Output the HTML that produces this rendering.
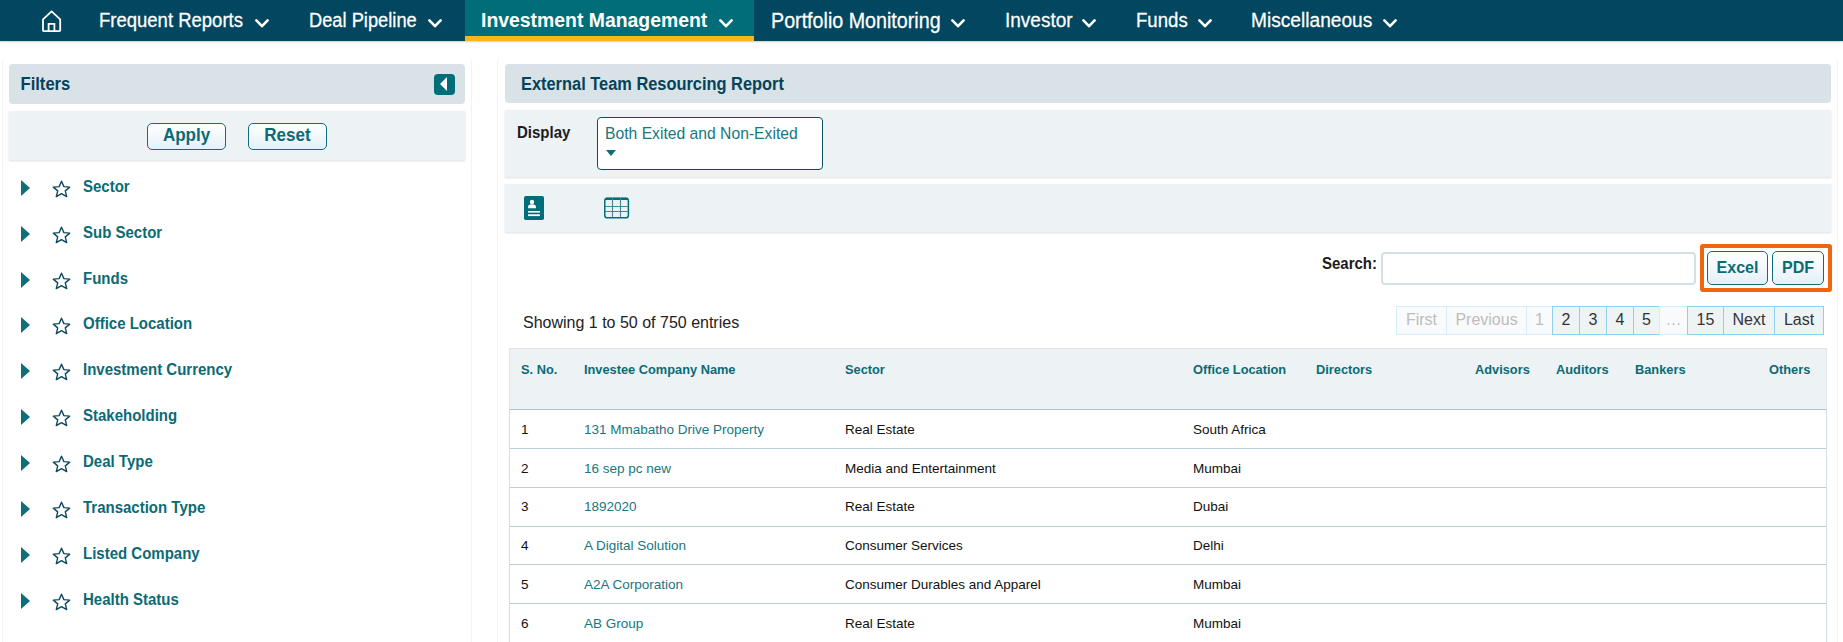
<!DOCTYPE html>
<html><head><meta charset="utf-8">
<style>
*{margin:0;padding:0;box-sizing:border-box}
html,body{width:1843px;height:642px;overflow:hidden;background:#fff;font-family:"Liberation Sans",sans-serif}
.a{position:absolute;white-space:nowrap}
#nav{position:absolute;left:0;top:0;width:1843px;height:41px;background:#02475f;box-shadow:0 1px 1.5px rgba(0,0,0,.2)}
#tab{position:absolute;left:465px;top:0;width:289px;height:41px;background:#016d78;border-bottom:5px solid #fbb519}
.nt{position:absolute;top:9.8px;color:#fff;font-size:19px;line-height:22px;transform:scaleY(1.075);transform-origin:0 17px;-webkit-text-stroke:0.25px #fff}
.chev{position:absolute;top:19px}
/* filter panel */
#fp{position:absolute;left:2px;top:57px;width:470px;height:600px;border-left:1px solid #f1f3f4;border-right:1px solid #f1f3f4;border-radius:5px}
#fh{position:absolute;left:9px;top:64px;width:456px;height:40px;background:#d8e2e7;border-radius:4px}
#fbar{position:absolute;left:9px;top:111px;width:456px;height:49px;background:#edf2f5;box-shadow:0 1px 2px rgba(0,0,0,.13)}
.btn{position:absolute;height:27px;border:1.5px solid #0f6f79;border-radius:5px;background:linear-gradient(#ffffff,#e4f1f8);color:#0b6b75;font-weight:bold;font-size:17px;text-align:center;line-height:23px}
.bt{display:inline-block;transform:scaleY(1.08);transform-origin:0 75%}
.fi{position:absolute;left:0;height:20px;width:460px}
.fi .tri{position:absolute;left:21px;top:0;width:0;height:0;border-top:8px solid transparent;border-bottom:8px solid transparent;border-left:9px solid #0e6f78}
.fi svg{position:absolute;left:52px;top:0}
.fi span{position:absolute;left:83px;top:-3px;font-size:15px;font-weight:bold;color:#0b6b75;line-height:18px;transform:scaleY(1.09);transform-origin:0 4px}
/* main */
#mp{position:absolute;left:497px;top:57px;width:1341px;height:600px;border-left:1px solid #f1f3f4;border-right:1px solid #f1f3f4;border-radius:5px}
#rh{position:absolute;left:505px;top:64px;width:1326px;height:39px;background:#d8e2e7;border-radius:4px}
#dbar{position:absolute;left:505px;top:110px;width:1326px;height:67px;background:#edf2f5;box-shadow:0 1px 2px rgba(0,0,0,.13)}
#ibar{position:absolute;left:505px;top:184px;width:1326px;height:48px;background:#edf2f5;box-shadow:0 1px 2px rgba(0,0,0,.13)}
#sel{position:absolute;left:597px;top:117px;width:226px;height:53px;background:#fff;border:1.5px solid #0d4f5f;border-radius:4px}
#search{position:absolute;left:1381px;top:252px;width:315px;height:33px;border:2px solid #d5e0e4;border-radius:4px;background:#fff}
#obox{position:absolute;left:1700px;top:244px;width:132px;height:48px;border:4px solid #f0660e;border-radius:3px}
.pg{position:absolute;top:306px;height:29px;border:1px solid #8fd0ee;background:#eef3f6;color:#333;font-size:16px;text-align:center;line-height:25px}
.pg.d{background:#f9fafb;border-color:#d5eef9;color:#bdbdbd}
#tbl{position:absolute;left:509px;top:348px;width:1318px;height:300px;border:1px solid #d3dde2;border-bottom:none}
#th{position:absolute;left:509px;top:348px;width:1318px;height:62px;background:#edf2f5;border:1px solid #dde3e6;border-bottom:1.5px solid #a9c3cc}
.hc{position:absolute;top:362px;font-size:12.8px;font-weight:bold;color:#0b6b75}
.rl{position:absolute;left:510px;width:1316px;height:1px;background:#b9cfd6}
.c{position:absolute;font-size:13.5px;color:#111}
.lk{color:#17777f}
</style></head><body>
<div id="nav"></div>
<div id="tab"></div>
<!-- home icon -->
<svg class="a" style="left:42px;top:10px" width="20" height="23" viewBox="0 0 20 23"><path d="M1 9.4 L9.6 1.3 L18.2 9.4 V20.2 Q18.2 21.1 17.3 21.1 H1.9 Q1 21.1 1 20.2 Z" fill="none" stroke="#fff" stroke-width="1.8" stroke-linejoin="round"/><path d="M6.6 21 V13.9 H12.4 V21" fill="none" stroke="#fff" stroke-width="1.8"/></svg>
<div class="nt" style="left:99px;font-size:18.5px">Frequent Reports</div>
<div class="nt" style="left:309px;font-size:18.3px">Deal Pipeline</div>
<div class="nt" style="left:481px;top:8.9px;font-weight:bold;font-size:19.4px;-webkit-text-stroke:0">Investment Management</div>
<div class="nt" style="left:771px;font-size:19.7px">Portfolio Monitoring</div>
<div class="nt" style="left:1005px">Investor</div>
<div class="nt" style="left:1136px;font-size:18.6px">Funds</div>
<div class="nt" style="left:1251px;font-size:19.15px">Miscellaneous</div>
<svg class="chev" style="left:255px" width="14" height="10" viewBox="0 0 14 10"><path d="M1.4 1.4 L7 7.2 L12.6 1.4" fill="none" stroke="#fff" stroke-width="2.6" stroke-linecap="round" stroke-linejoin="round"/></svg>
<svg class="chev" style="left:428px" width="14" height="10" viewBox="0 0 14 10"><path d="M1.4 1.4 L7 7.2 L12.6 1.4" fill="none" stroke="#fff" stroke-width="2.6" stroke-linecap="round" stroke-linejoin="round"/></svg>
<svg class="chev" style="left:719px" width="14" height="10" viewBox="0 0 14 10"><path d="M1.4 1.4 L7 7.2 L12.6 1.4" fill="none" stroke="#fff" stroke-width="2.6" stroke-linecap="round" stroke-linejoin="round"/></svg>
<svg class="chev" style="left:951px" width="14" height="10" viewBox="0 0 14 10"><path d="M1.4 1.4 L7 7.2 L12.6 1.4" fill="none" stroke="#fff" stroke-width="2.6" stroke-linecap="round" stroke-linejoin="round"/></svg>
<svg class="chev" style="left:1082px" width="14" height="10" viewBox="0 0 14 10"><path d="M1.4 1.4 L7 7.2 L12.6 1.4" fill="none" stroke="#fff" stroke-width="2.6" stroke-linecap="round" stroke-linejoin="round"/></svg>
<svg class="chev" style="left:1198px" width="14" height="10" viewBox="0 0 14 10"><path d="M1.4 1.4 L7 7.2 L12.6 1.4" fill="none" stroke="#fff" stroke-width="2.6" stroke-linecap="round" stroke-linejoin="round"/></svg>
<svg class="chev" style="left:1383px" width="14" height="10" viewBox="0 0 14 10"><path d="M1.4 1.4 L7 7.2 L12.6 1.4" fill="none" stroke="#fff" stroke-width="2.6" stroke-linecap="round" stroke-linejoin="round"/></svg>

<!-- FILTER PANEL -->
<div id="fp"></div>
<div id="fh"></div>
<div class="a" style="left:20.5px;top:75px;font-size:16.6px;font-weight:bold;color:#06435b;line-height:18px;transform:scaleY(1.08);transform-origin:0 2.5px">Filters</div>
<div class="a" style="left:434px;top:74px;width:21px;height:21px;background:#016d78;border-radius:4px"></div>
<div class="a" style="left:440px;top:77.2px;width:0;height:0;border-top:7.3px solid transparent;border-bottom:7.3px solid transparent;border-right:7.2px solid #fff"></div>
<div id="fbar"></div>
<div class="btn" style="left:147px;top:123px;width:79px"><span class="bt">Apply</span></div>
<div class="btn" style="left:248px;top:123px;width:79px"><span class="bt">Reset</span></div>

<div class="fi" style="top:180px"><div class="tri"></div><svg width="19" height="18" viewBox="0 0 19 18"><path d="M9.5 1.2 L11.9 6.6 L17.7 7.1 L13.3 10.9 L14.7 16.6 L9.5 13.6 L4.3 16.6 L5.7 10.9 L1.3 7.1 L7.1 6.6 Z" fill="none" stroke="#0d4a5e" stroke-width="1.4" stroke-linejoin="round"/></svg><span>Sector</span></div>
<div class="fi" style="top:226px"><div class="tri"></div><svg width="19" height="18" viewBox="0 0 19 18"><path d="M9.5 1.2 L11.9 6.6 L17.7 7.1 L13.3 10.9 L14.7 16.6 L9.5 13.6 L4.3 16.6 L5.7 10.9 L1.3 7.1 L7.1 6.6 Z" fill="none" stroke="#0d4a5e" stroke-width="1.4" stroke-linejoin="round"/></svg><span>Sub Sector</span></div>
<div class="fi" style="top:272px"><div class="tri"></div><svg width="19" height="18" viewBox="0 0 19 18"><path d="M9.5 1.2 L11.9 6.6 L17.7 7.1 L13.3 10.9 L14.7 16.6 L9.5 13.6 L4.3 16.6 L5.7 10.9 L1.3 7.1 L7.1 6.6 Z" fill="none" stroke="#0d4a5e" stroke-width="1.4" stroke-linejoin="round"/></svg><span>Funds</span></div>
<div class="fi" style="top:317px"><div class="tri"></div><svg width="19" height="18" viewBox="0 0 19 18"><path d="M9.5 1.2 L11.9 6.6 L17.7 7.1 L13.3 10.9 L14.7 16.6 L9.5 13.6 L4.3 16.6 L5.7 10.9 L1.3 7.1 L7.1 6.6 Z" fill="none" stroke="#0d4a5e" stroke-width="1.4" stroke-linejoin="round"/></svg><span>Office Location</span></div>
<div class="fi" style="top:363px"><div class="tri"></div><svg width="19" height="18" viewBox="0 0 19 18"><path d="M9.5 1.2 L11.9 6.6 L17.7 7.1 L13.3 10.9 L14.7 16.6 L9.5 13.6 L4.3 16.6 L5.7 10.9 L1.3 7.1 L7.1 6.6 Z" fill="none" stroke="#0d4a5e" stroke-width="1.4" stroke-linejoin="round"/></svg><span>Investment Currency</span></div>
<div class="fi" style="top:409px"><div class="tri"></div><svg width="19" height="18" viewBox="0 0 19 18"><path d="M9.5 1.2 L11.9 6.6 L17.7 7.1 L13.3 10.9 L14.7 16.6 L9.5 13.6 L4.3 16.6 L5.7 10.9 L1.3 7.1 L7.1 6.6 Z" fill="none" stroke="#0d4a5e" stroke-width="1.4" stroke-linejoin="round"/></svg><span>Stakeholding</span></div>
<div class="fi" style="top:455px"><div class="tri"></div><svg width="19" height="18" viewBox="0 0 19 18"><path d="M9.5 1.2 L11.9 6.6 L17.7 7.1 L13.3 10.9 L14.7 16.6 L9.5 13.6 L4.3 16.6 L5.7 10.9 L1.3 7.1 L7.1 6.6 Z" fill="none" stroke="#0d4a5e" stroke-width="1.4" stroke-linejoin="round"/></svg><span>Deal Type</span></div>
<div class="fi" style="top:501px"><div class="tri"></div><svg width="19" height="18" viewBox="0 0 19 18"><path d="M9.5 1.2 L11.9 6.6 L17.7 7.1 L13.3 10.9 L14.7 16.6 L9.5 13.6 L4.3 16.6 L5.7 10.9 L1.3 7.1 L7.1 6.6 Z" fill="none" stroke="#0d4a5e" stroke-width="1.4" stroke-linejoin="round"/></svg><span>Transaction Type</span></div>
<div class="fi" style="top:547px"><div class="tri"></div><svg width="19" height="18" viewBox="0 0 19 18"><path d="M9.5 1.2 L11.9 6.6 L17.7 7.1 L13.3 10.9 L14.7 16.6 L9.5 13.6 L4.3 16.6 L5.7 10.9 L1.3 7.1 L7.1 6.6 Z" fill="none" stroke="#0d4a5e" stroke-width="1.4" stroke-linejoin="round"/></svg><span>Listed Company</span></div>
<div class="fi" style="top:593px"><div class="tri"></div><svg width="19" height="18" viewBox="0 0 19 18"><path d="M9.5 1.2 L11.9 6.6 L17.7 7.1 L13.3 10.9 L14.7 16.6 L9.5 13.6 L4.3 16.6 L5.7 10.9 L1.3 7.1 L7.1 6.6 Z" fill="none" stroke="#0d4a5e" stroke-width="1.4" stroke-linejoin="round"/></svg><span>Health Status</span></div>

<!-- MAIN PANEL -->
<div id="mp"></div>
<div id="rh"></div>
<div class="a" style="left:521px;top:74px;font-size:16.4px;font-weight:bold;color:#06435b;line-height:18px;transform:scaleY(1.08);transform-origin:0 3.4px">External Team Resourcing Report</div>
<div id="dbar"></div>
<div class="a" style="left:517px;top:124px;font-size:15px;font-weight:bold;color:#1c1c1c;line-height:17px;transform:scaleY(1.15);transform-origin:0 13.7px">Display</div>
<div id="sel"></div>
<div class="a" style="left:605px;top:124.5px;font-size:15.7px;color:#17777f;line-height:18px">Both Exited and Non-Exited</div>
<div class="a" style="left:606px;top:150px;width:0;height:0;border-left:5.5px solid transparent;border-right:5.5px solid transparent;border-top:6.5px solid #0e6f78"></div>
<div id="ibar"></div>
<svg class="a" style="left:524px;top:196px" width="20" height="24" viewBox="0 0 20 24"><rect x="0" y="0" width="20" height="24" rx="1.8" fill="#016d78"/><circle cx="8" cy="5.9" r="2.2" fill="#fff"/><path d="M4 12.2 V11 Q4 8.3 8 8.3 Q12 8.3 12 11 V12.2 Z" fill="#fff"/><rect x="4" y="15" width="12" height="1.6" fill="#fff"/><rect x="4" y="18.3" width="12" height="1.8" fill="#fff"/></svg>
<svg class="a" style="left:604px;top:197px" width="26" height="22" viewBox="0 0 26 22"><rect x="0.8" y="1.2" width="23.6" height="19.6" rx="2.6" fill="none" stroke="#016d78" stroke-width="1.5"/><rect x="1.5" y="0.8" width="22.2" height="2.2" fill="#016d78"/><path d="M8.5 1 V20.5 M16.5 1 V20.5 M1 9.5 H24.5 M1 14.5 H24.5" stroke="#3c8a93" stroke-width="1.1"/></svg>

<div class="a" style="left:1322px;top:255px;font-size:15px;font-weight:bold;color:#1c1c1c;line-height:17px;transform:scaleY(1.15);transform-origin:0 13.7px">Search:</div>
<div id="search"></div>
<div id="obox"></div>
<div class="btn" style="left:1707px;top:251px;width:61px;height:34px;line-height:31px;font-size:16px"><span class="bt">Excel</span></div>
<div class="btn" style="left:1772px;top:251px;width:52px;height:34px;line-height:31px;font-size:16px"><span class="bt">PDF</span></div>

<div class="a" style="left:523px;top:314px;font-size:16px;color:#222;line-height:18px">Showing 1 to 50 of 750 entries</div>

<div class="pg d" style="left:1396px;width:51px">First</div>
<div class="pg d" style="left:1446px;width:81px">Previous</div>
<div class="pg d" style="left:1526px;width:27px">1</div>
<div class="pg" style="left:1552px;width:28px">2</div>
<div class="pg" style="left:1579px;width:28px">3</div>
<div class="pg" style="left:1606px;width:28px">4</div>
<div class="pg" style="left:1633px;width:27px">5</div>
<div class="pg d" style="left:1659px;width:29px">…</div>
<div class="pg" style="left:1687px;width:37px">15</div>
<div class="pg" style="left:1723px;width:52px">Next</div>
<div class="pg" style="left:1774px;width:50px">Last</div>

<div id="tbl"></div>
<div id="th"></div>
<div class="hc" style="left:521px">S. No.</div>
<div class="hc" style="left:584px">Investee Company Name</div>
<div class="hc" style="left:845px">Sector</div>
<div class="hc" style="left:1193px">Office Location</div>
<div class="hc" style="left:1316px">Directors</div>
<div class="hc" style="left:1475px">Advisors</div>
<div class="hc" style="left:1556px">Auditors</div>
<div class="hc" style="left:1635px">Bankers</div>
<div class="hc" style="left:1769px">Others</div>

<div class="rl" style="top:448px"></div>
<div class="rl" style="top:487px"></div>
<div class="rl" style="top:526px"></div>
<div class="rl" style="top:564px"></div>
<div class="rl" style="top:603px"></div>

<div class="c" style="left:521px;top:422px">1</div><div class="c lk" style="left:584px;top:422px">131 Mmabatho Drive Property</div><div class="c" style="left:845px;top:422px">Real Estate</div><div class="c" style="left:1193px;top:422px">South Africa</div>
<div class="c" style="left:521px;top:461px">2</div><div class="c lk" style="left:584px;top:461px">16 sep pc new</div><div class="c" style="left:845px;top:461px">Media and Entertainment</div><div class="c" style="left:1193px;top:461px">Mumbai</div>
<div class="c" style="left:521px;top:499px">3</div><div class="c lk" style="left:584px;top:499px">1892020</div><div class="c" style="left:845px;top:499px">Real Estate</div><div class="c" style="left:1193px;top:499px">Dubai</div>
<div class="c" style="left:521px;top:538px">4</div><div class="c lk" style="left:584px;top:538px">A Digital Solution</div><div class="c" style="left:845px;top:538px">Consumer Services</div><div class="c" style="left:1193px;top:538px">Delhi</div>
<div class="c" style="left:521px;top:577px">5</div><div class="c lk" style="left:584px;top:577px">A2A Corporation</div><div class="c" style="left:845px;top:577px">Consumer Durables and Apparel</div><div class="c" style="left:1193px;top:577px">Mumbai</div>
<div class="c" style="left:521px;top:616px">6</div><div class="c lk" style="left:584px;top:616px">AB Group</div><div class="c" style="left:845px;top:616px">Real Estate</div><div class="c" style="left:1193px;top:616px">Mumbai</div>
</body></html>
